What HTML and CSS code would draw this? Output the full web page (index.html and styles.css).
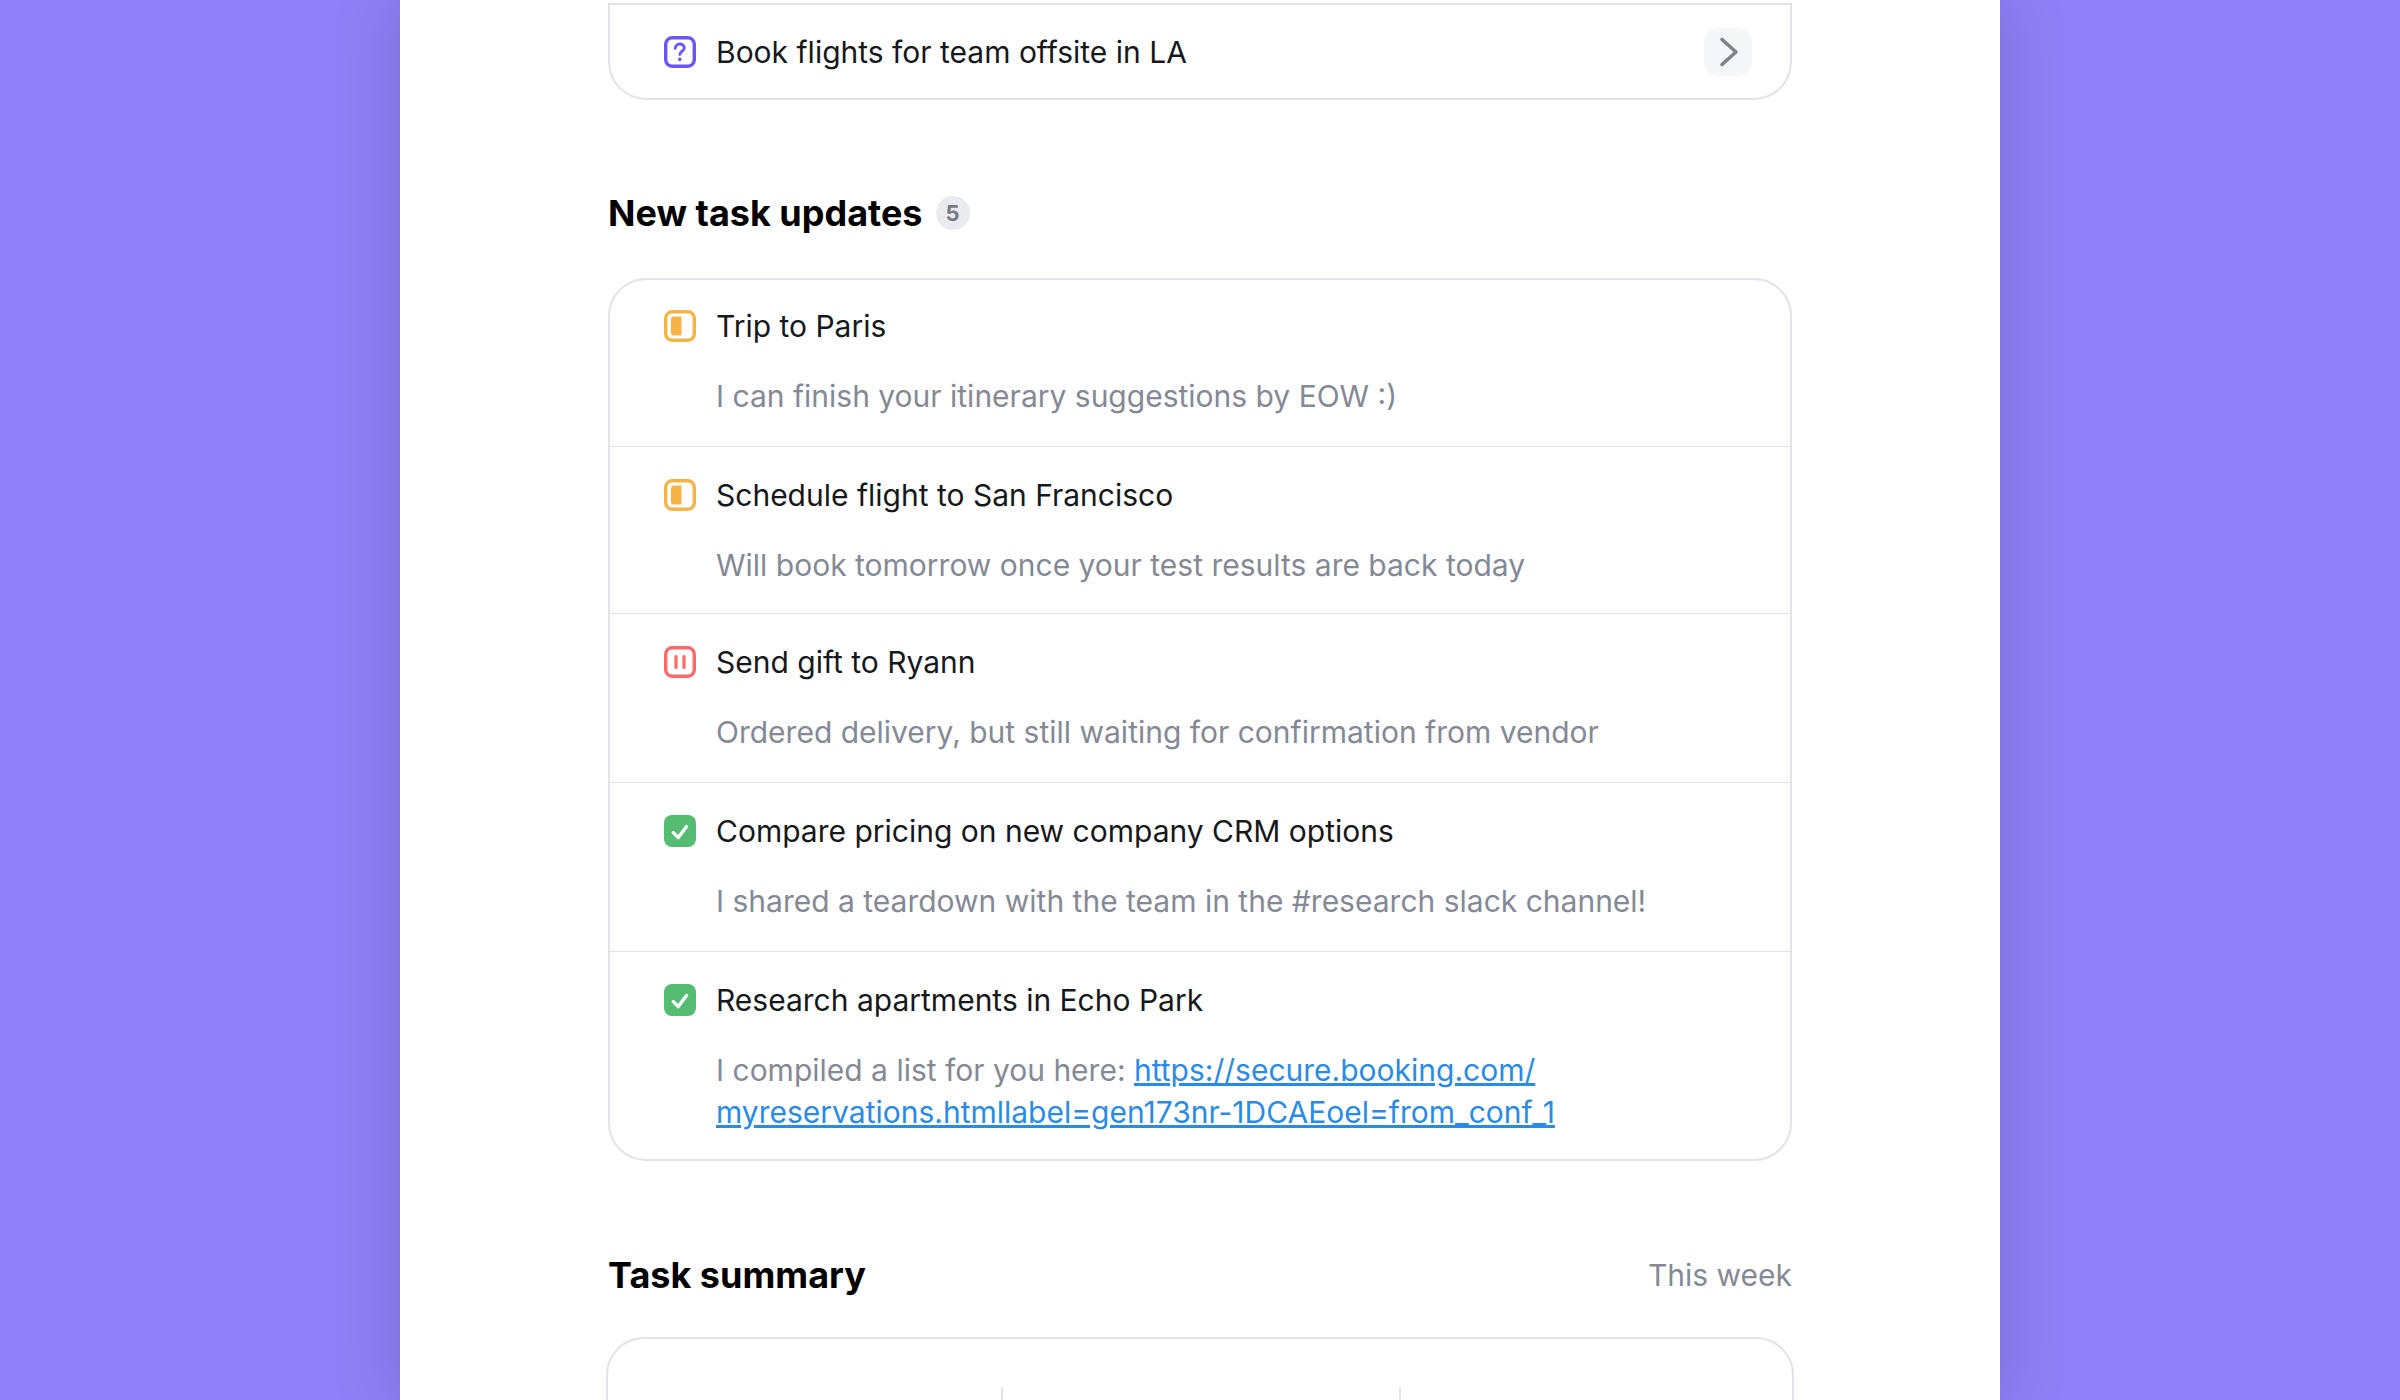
FILE: index.html
```html
<!DOCTYPE html>
<html lang="en">

<head>
    <meta charset="UTF-8">
    <title>Task updates</title>
    <link rel="stylesheet" href="styles.css">
</head>

<body>
    <main class="panel">
        <div class="card card-clipped">
            <div class="task-row task-row-single">
                <svg class="status" viewBox="0 0 32 32"><rect x="1.7" y="1.7" width="28.6" height="28.6" rx="6.5" fill="none" stroke="#6a56f6" stroke-width="3.4"/><path d="M11.2 12.4c0-2.6 2-4.4 4.6-4.4s4.5 1.7 4.5 4c0 3.3-4.5 3.2-4.5 6.6" fill="none" stroke="#6a56f6" stroke-width="2.8" stroke-linecap="round"/><circle cx="15.8" cy="23.4" r="1.8" fill="#6a56f6"/></svg>
                <span class="task-title">Book flights for team offsite in LA</span>
                <span class="open-btn"><svg viewBox="0 0 48 48" width="48" height="48"><path d="M18 11.5L32 24 18 36.5" fill="none" stroke="#7f828c" stroke-width="3.6" stroke-linecap="round" stroke-linejoin="round"/></svg></span>
            </div>
        </div>

        <div class="section-head head-updates">
            <h2>New task updates</h2>
            <span class="count">5</span>
        </div>

        <div class="card">
            <div class="task-row">
                <div class="task-line">
                    <svg class="status" viewBox="0 0 32 32"><rect x="1.7" y="1.7" width="28.6" height="28.6" rx="6.5" fill="none" stroke="#f5b345" stroke-width="3.4"/><path d="M17.5 6.5H10a3 3 0 0 0-3 3v13a3 3 0 0 0 3 3h7.5z" fill="#f5b345"/></svg>
                    <span class="task-title">Trip to Paris</span>
                </div>
                <p class="task-note">I can finish your itinerary suggestions by EOW :)</p>
            </div>
            <div class="task-row">
                <div class="task-line">
                    <svg class="status" viewBox="0 0 32 32"><rect x="1.7" y="1.7" width="28.6" height="28.6" rx="6.5" fill="none" stroke="#f5b345" stroke-width="3.4"/><path d="M17.5 6.5H10a3 3 0 0 0-3 3v13a3 3 0 0 0 3 3h7.5z" fill="#f5b345"/></svg>
                    <span class="task-title">Schedule flight to San Francisco</span>
                </div>
                <p class="task-note">Will book tomorrow once your test results are back today</p>
            </div>
            <div class="task-row">
                <div class="task-line">
                    <svg class="status" viewBox="0 0 32 32"><rect x="1.7" y="1.7" width="28.6" height="28.6" rx="6.5" fill="none" stroke="#fb6a68" stroke-width="3.4"/><path d="M12 10.5v11M20 10.5v11" fill="none" stroke="#fb6a68" stroke-width="3.2" stroke-linecap="round"/></svg>
                    <span class="task-title">Send gift to Ryann</span>
                </div>
                <p class="task-note">Ordered delivery, but still waiting for confirmation from vendor</p>
            </div>
            <div class="task-row">
                <div class="task-line">
                    <svg class="status" viewBox="0 0 32 32"><rect width="32" height="32" rx="8" fill="#55bd72"/><path d="M9.3 17.6l5 5 8.2-11" fill="none" stroke="#fff" stroke-width="3.4" stroke-linecap="round" stroke-linejoin="round"/></svg>
                    <span class="task-title">Compare pricing on new company CRM options</span>
                </div>
                <p class="task-note">I shared a teardown with the team in the #research slack channel!</p>
            </div>
            <div class="task-row">
                <div class="task-line">
                    <svg class="status" viewBox="0 0 32 32"><rect width="32" height="32" rx="8" fill="#55bd72"/><path d="M9.3 17.6l5 5 8.2-11" fill="none" stroke="#fff" stroke-width="3.4" stroke-linecap="round" stroke-linejoin="round"/></svg>
                    <span class="task-title">Research apartments in Echo Park</span>
                </div>
                <p class="task-note">I compiled a list for you here: <a href="#">https://secure.booking.com/<br>myreservations.htmllabel=gen173nr-1DCAEoel=from_conf_1</a></p>
            </div>
        </div>

        <div class="section-head head-summary">
            <h2>Task summary</h2>
            <span class="range">This week</span>
        </div>

        <div class="summary-card">
            <div class="summary-cell"></div>
            <div class="summary-cell"></div>
            <div class="summary-cell"></div>
        </div>
    </main>
</body>

</html>
```

FILE: styles.css
```css
* {
    margin: 0;
    padding: 0;
    box-sizing: border-box;
}

body {
    font-family: Inter, "Liberation Sans", sans-serif;
    background-color: #9080f7;
    height: 1400px;
    overflow: hidden;
}

.panel {
    width: 1600px;
    height: 1400px;
    margin: 0 auto;
    padding: 3px 208px 0;
    background-color: #ffffff;
    box-shadow: 0 0 60px rgba(40, 30, 90, 0.22);
    overflow: hidden;
}

.card {
    border: 2px solid #e2e2ea;
    border-radius: 38px;
}

.card-clipped {
    border-top: 0;
    border-radius: 0 0 38px 38px;
}

.task-row {
    height: 169px;
    padding: 30px 54px 0;
    border-top: 1px solid #e2e2ea;
}

.task-row:first-child {
    height: 166px;
    padding-top: 28px;
    border-top: 0;
}

.task-row:nth-child(2) {
    height: 167px;
}

.task-row:last-child {
    height: 208px;
}

.card-clipped .task-row-single {
    display: flex;
    align-items: center;
    height: 95px;
    padding: 1px 38px 0 54px;
    border-top: 2px solid #e2e2ea;
}

.task-line {
    display: flex;
    align-items: center;
}

.status {
    width: 32px;
    height: 32px;
    flex-shrink: 0;
}

.task-title {
    margin-left: 20px;
    font-size: 30px;
    line-height: 36px;
    color: #17181c;
}

.task-note {
    margin: 31px 0 0 52px;
    font-size: 30px;
    line-height: 42px;
    color: #858995;
}

.task-note a {
    color: #2a8be6;
}

.open-btn {
    width: 48px;
    height: 48px;
    margin-left: auto;
    border-radius: 14px;
    background-color: #f5f6f8;
}

.section-head {
    display: flex;
    align-items: center;
}

.section-head h2 {
    font-size: 36px;
    font-weight: 700;
    line-height: 44px;
    color: #000000;
}

.head-updates {
    margin: 91px 0 43px;
}

.head-summary {
    justify-content: space-between;
    margin: 92px 0 40px;
}

.count {
    width: 34px;
    height: 34px;
    margin-left: 13px;
    border-radius: 50%;
    background-color: #eaebef;
    color: #777b88;
    font-size: 22px;
    font-weight: 700;
    line-height: 34px;
    text-align: center;
}

.range {
    font-size: 30px;
    color: #858995;
}

.summary-card {
    display: grid;
    grid-template-columns: 1fr 398px 1fr;
    width: 1188px;
    height: 200px;
    margin-left: -2px;
    padding-top: 48px;
    border: 2px solid #e2e2ea;
    border-radius: 38px;
}

.summary-cell + .summary-cell {
    border-left: 2px solid #e2e2ea;
}
```
